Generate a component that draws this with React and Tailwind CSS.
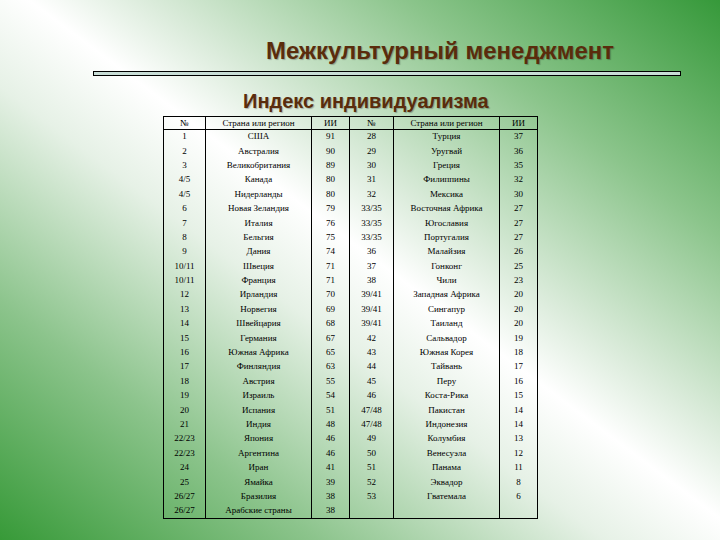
// Слайд: индекс индивидуализма (Хофстеде), две половины таблицы бок о бок

const LEFT = [
  ['1', 'США', '91'],
  ['2', 'Австралия', '90'],
  ['3', 'Великобритания', '89'],
  ['4/5', 'Канада', '80'],
  ['4/5', 'Нидерланды', '80'],
  ['6', 'Новая Зеландия', '79'],
  ['7', 'Италия', '76'],
  ['8', 'Бельгия', '75'],
  ['9', 'Дания', '74'],
  ['10/11', 'Швеция', '71'],
  ['10/11', 'Франция', '71'],
  ['12', 'Ирландия', '70'],
  ['13', 'Норвегия', '69'],
  ['14', 'Швейцария', '68'],
  ['15', 'Германия', '67'],
  ['16', 'Южная Африка', '65'],
  ['17', 'Финляндия', '63'],
  ['18', 'Австрия', '55'],
  ['19', 'Израиль', '54'],
  ['20', 'Испания', '51'],
  ['21', 'Индия', '48'],
  ['22/23', 'Япония', '46'],
  ['22/23', 'Аргентина', '46'],
  ['24', 'Иран', '41'],
  ['25', 'Ямайка', '39'],
  ['26/27', 'Бразилия', '38'],
  ['26/27', 'Арабские страны', '38'],
];

const RIGHT = [
  ['28', 'Турция', '37'],
  ['29', 'Уругвай', '36'],
  ['30', 'Греция', '35'],
  ['31', 'Филиппины', '32'],
  ['32', 'Мексика', '30'],
  ['33/35', 'Восточная Африка', '27'],
  ['33/35', 'Югославия', '27'],
  ['33/35', 'Португалия', '27'],
  ['36', 'Малайзия', '26'],
  ['37', 'Гонконг', '25'],
  ['38', 'Чили', '23'],
  ['39/41', 'Западная Африка', '20'],
  ['39/41', 'Сингапур', '20'],
  ['39/41', 'Таиланд', '20'],
  ['42', 'Сальвадор', '19'],
  ['43', 'Южная Корея', '18'],
  ['44', 'Тайвань', '17'],
  ['45', 'Перу', '16'],
  ['46', 'Коста-Рика', '15'],
  ['47/48', 'Пакистан', '14'],
  ['47/48', 'Индонезия', '14'],
  ['49', 'Колумбия', '13'],
  ['50', 'Венесуэла', '12'],
  ['51', 'Панама', '11'],
  ['52', 'Эквадор', '8'],
  ['53', 'Гватемала', '6'],
  ['', '', ''],
];

const HEAD = ['№', 'Страна или регион', 'ИИ', '№', 'Страна или регион', 'ИИ'];

function IndexTable() {
  return (
    <table className="table-fixed border-collapse border border-black text-[9px] leading-none text-black [font-family:'Liberation_Serif',serif]">
      <colgroup>
        <col className="w-[42px]" />
        <col className="w-[106px]" />
        <col className="w-[38px]" />
        <col className="w-[44px]" />
        <col className="w-[106px]" />
        <col className="w-[38px]" />
      </colgroup>
      <thead>
        <tr className="h-[13px]">
          {HEAD.map((h, i) => (
            <th key={i} className="border border-black p-0 text-center font-normal">
              {h}
            </th>
          ))}
        </tr>
      </thead>
      <tbody>
        {LEFT.map((l, i) => {
          const cells = [...l, ...RIGHT[i]];
          return (
            <tr key={i} className="h-[14.4px]">
              {cells.map((c, j) => (
                <td key={j} className="border-x border-black p-0 text-center">
                  {c}
                </td>
              ))}
            </tr>
          );
        })}
      </tbody>
    </table>
  );
}

export default function App() {
  return (
    <div className="w-[720px] h-[540px] overflow-hidden bg-[linear-gradient(to_top_right,#379a38_0%,#8cc48c_22%,#e6f1e6_42%,#ffffff_52%,#dcecdc_60%,#8cc58c_78%,#36993a_100%)] [font-family:'Liberation_Sans',Arial,sans-serif]">
      <div className="pt-[37px] pl-[266px] text-[24px] leading-[28px] font-bold text-[#5a2c0c] [text-shadow:1px_1px_1px_rgba(0,0,0,0.25)]">
        Межкультурный менеджмент
      </div>
      <div className="mt-[6px] ml-[93px] w-[588px] h-[5px] border border-black bg-[#c8ddd6]" />
      <div className="mt-[13px] pl-[243px] text-[20px] leading-[24px] font-bold text-[#5a2c0c] [text-shadow:1px_1px_1px_rgba(0,0,0,0.25)]">
        Индекс индивидуализма
      </div>
      <div className="mt-[3px] ml-[163px]">
        <IndexTable />
      </div>
    </div>
  );
}
